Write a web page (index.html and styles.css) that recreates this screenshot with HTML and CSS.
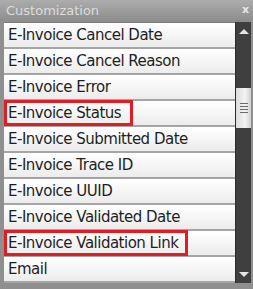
FILE: index.html
```html
<!DOCTYPE html>
<html>
<head>
<meta charset="utf-8">
<link rel="stylesheet" href="styles.css">
</head>
<body>
<div class="window">
  <div class="titlebar">
    <span class="title">Customization</span>
    <span class="close">x</span>
  </div>
  <div class="body">
    <ul class="list">
      <li class="row">E-Invoice Cancel Date</li>
      <li class="row">E-Invoice Cancel Reason</li>
      <li class="row">E-Invoice Error</li>
      <li class="row"><span class="mark mark-status">E-Invoice Status</span></li>
      <li class="row">E-Invoice Submitted Date</li>
      <li class="row">E-Invoice Trace ID</li>
      <li class="row">E-Invoice UUID</li>
      <li class="row">E-Invoice Validated Date</li>
      <li class="row"><span class="mark mark-link">E-Invoice Validation Link</span></li>
      <li class="row">Email</li>
    </ul>
    <div class="scrollbar">
      <div class="arrow up"></div>
      <div class="track">
        <div class="thumb"><span></span><span></span><span></span><span></span></div>
      </div>
      <div class="arrow down"></div>
    </div>
  </div>
</div>
</body>
</html>
```
FILE: styles.css
```css
html, body {
  margin: 0;
  padding: 0;
}
body {
  width: 253px;
  height: 289px;
  overflow: hidden;
  background: #8f8f8f;
}
.window {
  width: 253px;
  height: 289px;
  display: flex;
  flex-direction: column;
  background: #8f8f8f;
}
.titlebar {
  height: 21px;
  flex: none;
  display: flex;
  align-items: center;
  justify-content: space-between;
  padding: 0 4px 0 6px;
  background: linear-gradient(#acacac, #8d8d8d);
  font-family: "DejaVu Sans", sans-serif;
  font-size: 13px;
  color: #dcdcdc;
}
.close {
  font-size: 11px;
  font-weight: bold;
  color: #e8e8e8;
  margin-top: -2px;
}
.body {
  flex: 1;
  display: flex;
  padding: 1px 2px 6px 4px;
  min-height: 0;
}
.list {
  flex: 1;
  list-style: none;
  margin: 0;
  padding: 0;
  border-top: 1px solid #7a7a7a;
  background: #a5a5a5;
  overflow: hidden;
}
.row {
  height: 24px;
  margin-bottom: 2px;
  display: flex;
  align-items: center;
  background: linear-gradient(#ffffff, #ececec);
  font-family: "DejaVu Sans", sans-serif;
  font-size: 15px;
  letter-spacing: -0.5px;
  color: #1e1e1e;
  white-space: nowrap;
  padding-left: 4px;
}
.mark {
  box-sizing: border-box;
  align-self: stretch;
  display: flex;
  align-items: center;
  margin: -1px 0 0 -4px;
  padding-left: 1px;
  height: 26px;
  border: 3px solid #e31b23;
}
.mark-status {
  width: 129px;
}
.mark-link {
  width: 184px;
}
.scrollbar {
  width: 15px;
  flex: none;
  display: flex;
  flex-direction: column;
  background: #3f3f3f;
  border-left: 1px solid #2c2c2c;
}
.arrow {
  height: 18px;
  display: flex;
  align-items: center;
  justify-content: center;
}
.arrow::before {
  content: "";
  width: 0;
  height: 0;
  border-left: 5px solid transparent;
  border-right: 5px solid transparent;
}
.up::before {
  border-bottom: 5px solid #e4e4e4;
}
.down::before {
  border-top: 5px solid #e4e4e4;
}
.track {
  flex: 1;
  padding-top: 48px;
}
.thumb {
  height: 40px;
  background: linear-gradient(90deg, #dcdcdc, #f4f4f4 60%, #d0d0d0);
  display: flex;
  flex-direction: column;
  align-items: center;
  justify-content: center;
  gap: 2px;
}
.thumb span {
  width: 8px;
  height: 1px;
  background: #6a6a6a;
}
```
